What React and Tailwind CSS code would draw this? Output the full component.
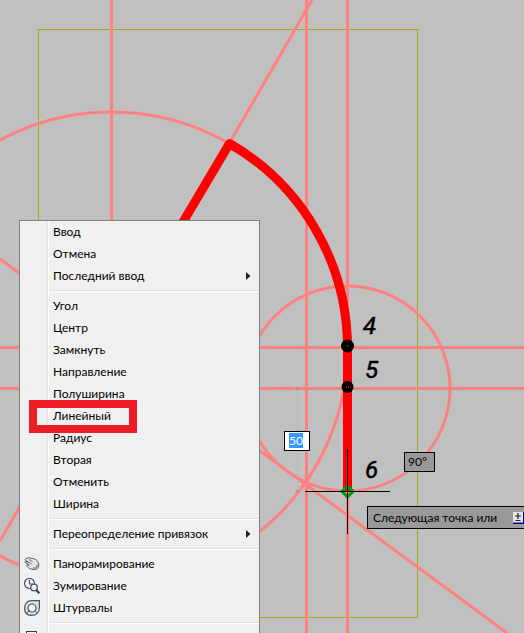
import React from "react";

function PanIcon() {
  return (
    <svg width="16" height="16" viewBox="0 0 16 16" fill="none" aria-hidden="true">
      <path d="M2 2.600C3.500 1.400 5.200 1.600 7 2.200c2.600.300 5 1.200 6.300 2.700 1.600 1.800 1.900 4.400 1 6.400-1 1.900-3 2.500-5.200 2.200-2.300-.3-4.300-1.400-5.700-2.700C2.500 10 2 9.200 2.900 8.900L5.200 9.200 1.200 6.400C.5 5.700 1 5.100 1.800 5.300L4.500 6.300 1.500 4.200C1 3.600 1.300 3 2 2.600Z" fill="#e3e6e9" stroke="#555d66" />
      <path d="M5 3.500l3.500 2M4.500 6.300l3 1.500" stroke="#6b737c" />
      <path d="M9 12c2.500.5 4.200-.8 4.500-3.500" stroke="#9aa2aa" strokeWidth="2" />
    </svg>
  );
}

function ZoomIcon() {
  return (
    <svg width="16" height="16" viewBox="0 0 16 16" fill="none" aria-hidden="true">
      <circle cx="5.500" cy="5.500" r="5" fill="#f4f6f8" stroke="#4a5562" strokeWidth="1.200" />
      <path d="M5.500 2v4h3.500" stroke="#4a5562" strokeWidth="1.200" />
      <circle cx="10" cy="9.500" r="3.300" fill="#e6f0f5" stroke="#4a5562" strokeWidth="1.300" />
      <path d="M12.300 12l3 3.300" stroke="#343d47" strokeWidth="2" />
    </svg>
  );
}

function WheelIcon() {
  return (
    <svg width="16" height="16" viewBox="0 0 16 16" fill="none" aria-hidden="true">
      <path d="M7.500 .6h7.900V8c0 4.500-3.300 7.400-7.900 7.400S.6 12.500.6 8 3.500.6 7.500.6Z" fill="#dde1e6" stroke="#4a5562" strokeWidth="1.200" />
      <circle cx="8" cy="8" r="4" fill="#f2f4f6" stroke="#4a5562" strokeWidth="1.200" />
      <path d="M5.200 10.800l-2 2M10.800 10.800l2 2" stroke="#4a5562" />
    </svg>
  );
}

function CalculatorIcon() {
  return (
    <svg width="16" height="16" viewBox="0 0 16 16" fill="none" aria-hidden="true">
      <rect x="2.500" y="1.500" width="10" height="13" fill="#f4f6f8" stroke="#343d47" />
      <path d="M5 4.500h5" stroke="#4a5562" />
    </svg>
  );
}

const groups = [
  [{ label: "Ввод" }, { label: "Отмена" }, { label: "Последний ввод", submenu: true }],
  [
    { label: "Угол" },
    { label: "Центр" },
    { label: "Замкнуть" },
    { label: "Направление" },
    { label: "Полуширина" },
    { label: "Линейный", marked: true },
    { label: "Радиус" },
    { label: "Вторая" },
    { label: "Отменить" },
    { label: "Ширина" },
  ],
  [{ label: "Переопределение привязок", submenu: true }],
  [
    { label: "Панорамирование", icon: <PanIcon /> },
    { label: "Зумирование", icon: <ZoomIcon /> },
    { label: "Штурвалы", icon: <WheelIcon /> },
  ],
  [{ label: "", name: "Калькулятор", icon: <CalculatorIcon /> }],
];

function MenuItem({ item }) {
  return (
    <li role="none" className="relative">
      <button
        type="button"
        role="menuitem"
        aria-label={item.name}
        aria-haspopup={item.submenu ? "menu" : undefined}
        className="flex h-[22px] w-full items-center text-left"
      >
        <span className="flex w-[33px] shrink-0 items-center pl-1">{item.icon}</span>
        <span className="grow whitespace-nowrap">{item.label}</span>
        {item.submenu && (
          <svg className="mr-2" width="5" height="8" viewBox="0 0 5 8" aria-hidden="true">
            <path d="M0 0l4.500 4L0 8Z" fill="#222" />
          </svg>
        )}
      </button>
      {item.marked && (
        <span className="pointer-events-none absolute -top-[5px] left-[9px] z-10 h-[33px] w-[108px] border-8 border-[#ee1c25]" />
      )}
    </li>
  );
}

function ContextMenu() {
  return (
    <nav className="absolute left-[19px] top-[220px] w-[241px] border border-[#808080] bg-[#f0f0f0] text-xs text-black">
      <div className="absolute inset-y-0 left-[27px] w-[2px] border-l border-r border-l-[#e2e3e3] border-r-white" />
      <div role="menu" className="relative">
        {groups.map((items, index) => (
          <React.Fragment key={index}>
            {index > 0 && (
              <div role="separator" className="ml-[29px] flex h-2 items-center">
                <div className="h-[2px] w-full border-b border-t border-b-white border-t-[#e0e0e0]" />
              </div>
            )}
            <ul role="none">
              {items.map((item) => (
                <MenuItem key={item.label} item={item} />
              ))}
            </ul>
          </React.Fragment>
        ))}
      </div>
    </nav>
  );
}

function Drawing() {
  return (
    <svg className="absolute inset-0 h-full w-full" aria-label="Чертёж">
      <rect x="38.500" y="29.500" width="379" height="588" fill="none" stroke="#a8a80c" />
      <g fill="none" stroke="#ff8080" strokeWidth="3">
        <path d="M111.500 0V2000M306.500 0V2000M347.500 0V2000M0 347.500H3000M0 388.500H3000" />
        <path d="M312 0L0 541M0 259L1014 1007" />
        <circle cx="111.500" cy="348" r="236" />
        <circle cx="347.500" cy="388.500" r="102.500" />
      </g>
      <path d="M297.500 491V388.500H450A102.500 102.500 0 0 1 347.500 491" fill="none" stroke="#999" strokeDasharray="1 3" />
      <circle cx="297" cy="388.500" r="1.500" fill="#999" />
      <circle cx="297" cy="491" r="1.500" fill="#999" />
      <path d="M170 244L229.500 143.500A236 236 0 0 1 347.500 348V491" fill="none" stroke="#f00" strokeWidth="9" strokeLinejoin="round" />
      <g fill="#000">
        <circle cx="347.500" cy="346" r="6.500" />
        <circle cx="347.500" cy="387" r="6" />
      </g>
      <path d="M347.500 345v2M346.500 386v2M348.500 386v2" stroke="#d00000" />
      <path d="M347.500 486l5.500 5.500-5.500 5.500-5.500-5.500Z" fill="none" stroke="#00a000" strokeWidth="3" />
      <path d="M305 491.500H390M347.500 449V534" stroke="#000" />
      <g className="font-['Roboto'] text-2xl italic" fill="#000" stroke="#000" strokeWidth=".5">
        <text x="363" y="334">4</text>
        <text x="365" y="378">5</text>
        <text x="365" y="478">6</text>
      </g>
    </svg>
  );
}

export default function App() {
  return (
    <main className="relative h-screen overflow-hidden bg-[#c0c0c0] font-['Lato','Noto_Sans',sans-serif] text-xs">
      <Drawing />
      <label className="absolute left-[284px] top-[431px] flex h-5 w-[26px] items-start border border-black bg-white pl-1 pt-px">
        <input
          type="text"
          aria-label="Длина"
          defaultValue="50"
          className="h-[15px] w-[14px] bg-[#3399ff] p-0 leading-[15px] text-white outline-none"
        />
      </label>
      <output className="absolute left-[404px] top-[452px] flex h-5 w-[31px] items-center border border-black bg-[#999] pl-[3px]">
        90°
      </output>
      <div className="absolute left-[367px] top-[506px] flex h-[23px] w-[170px] items-center border border-black bg-[#999] pl-[5px]">
        <span className="w-[140px] whitespace-nowrap">Следующая точка или</span>
        <svg width="16" height="12" viewBox="0 0 16 12" aria-hidden="true">
          <rect width="16" height="12" fill="#0000a0" />
          <rect width="10" height="10.500" fill="#e6e6e6" />
          <path d="M5 1v6M2 4h6M2.500 8.500h5" stroke="#222" strokeWidth="1.200" />
        </svg>
      </div>
      <ContextMenu />
    </main>
  );
}
